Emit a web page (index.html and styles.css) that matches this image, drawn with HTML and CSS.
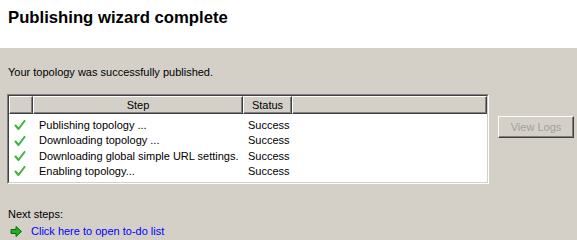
FILE: index.html
```html
<!DOCTYPE html>
<html>
	<head>
		<meta charset="utf-8">
		<title>Publishing wizard complete</title>
		<link rel="stylesheet" href="styles.css">
	</head>
	<body>
		<!-- 标题区 -->
		<div class="banner">
			<h1>Publishing wizard complete</h1>
		</div>

		<!-- 内容区 -->
		<div class="content">
			<p class="intro">Your topology was successfully published.</p>

			<div class="results">
				<div class="list">
					<div class="list-inner">
						<table>
							<thead>
								<tr>
									<th class="col-icon"></th>
									<th class="col-step">Step</th>
									<th class="col-status">Status</th>
									<th class="col-fill"></th>
								</tr>
							</thead>
							<tbody>
								<tr class="first">
									<td class="icon"><svg viewBox="0 0 12 11" width="12" height="11"><path d="M1.5 5.5 L4.5 9 L10.5 1" /></svg></td>
									<td>Publishing topology ...</td>
									<td>Success</td>
									<td></td>
								</tr>
								<tr>
									<td class="icon"><svg viewBox="0 0 12 11" width="12" height="11"><path d="M1.5 5.5 L4.5 9 L10.5 1" /></svg></td>
									<td>Downloading topology ...</td>
									<td>Success</td>
									<td></td>
								</tr>
								<tr>
									<td class="icon"><svg viewBox="0 0 12 11" width="12" height="11"><path d="M1.5 5.5 L4.5 9 L10.5 1" /></svg></td>
									<td>Downloading global simple URL settings.</td>
									<td>Success</td>
									<td></td>
								</tr>
								<tr>
									<td class="icon"><svg viewBox="0 0 12 11" width="12" height="11"><path d="M1.5 5.5 L4.5 9 L10.5 1" /></svg></td>
									<td>Enabling topology...</td>
									<td>Success</td>
									<td></td>
								</tr>
							</tbody>
						</table>
					</div>
				</div>
				<button class="logs" disabled>View Logs</button>
			</div>

			<p class="next">Next steps:</p>
			<a class="todo" href="#">
				<svg viewBox="0 0 13 13" width="13" height="13"><path d="M1 4.5 H6 V1.5 L11.5 6.5 L6 11.5 V8.5 H1 Z" /></svg>
				<span>Click here to open to-do list</span>
			</a>
		</div>
	</body>
</html>
```

FILE: styles.css
```css
/* 页面基础 */
html, body {
	margin: 0;
	padding: 0;
	height: 100%;
}

body {
	font-family: "Liberation Sans", Arial, sans-serif;
	font-size: 11px;
	color: #000;
	background-color: #d4d0c8;
}

/* 标题区 */
.banner {
	height: 48px;
	padding-left: 8px;
	background-color: #fff;
	overflow: hidden;
}

.banner h1 {
	margin: 8px 0 0;
	font-size: 16.7px;
	font-weight: bold;
	line-height: 20px;
}

/* 内容区 */
.content {
	padding: 0 0 0 7px;
}

.intro {
	margin: 0;
	padding: 18px 0 0 1px;
	line-height: 13px;
}

.results {
	display: flex;
	align-items: flex-start;
	margin-top: 15px;
}

/* 列表（凹陷边框） */
.list {
	flex-shrink: 0;
	width: 480px;
	height: 88px;
	border: 1px solid;
	border-color: #808080 #fff #fff #808080;
}

.list-inner {
	height: 86px;
	border: 1px solid;
	border-color: #404040 #d4d0c8 #d4d0c8 #404040;
	background-color: #fff;
	overflow: hidden;
}

.list table {
	width: 100%;
	border-collapse: separate;
	border-spacing: 0;
	table-layout: fixed;
}

.list th {
	box-sizing: border-box;
	height: 18px;
	padding: 0;
	font-weight: normal;
	text-align: center;
	line-height: 16px;
	background-color: #d4d0c8;
	border-top: 1px solid #fff;
	border-left: 1px solid #fff;
	border-right: 1px solid #404040;
	border-bottom: 1px solid #404040;
	box-shadow: inset 0 -1px 0 #808080, inset -1px 0 0 #808080;
}

.list .col-icon {
	width: 24px;
}

.list .col-step {
	width: 210px;
}

.list .col-status {
	width: 49px;
}

.list td {
	height: 15.4px;
	padding: 0 0 0 6px;
	line-height: 15.4px;
	white-space: nowrap;
	vertical-align: middle;
}

.list td:nth-child(3) {
	padding-left: 5px;
}

.list tr.first td {
	padding-top: 4px;
}

.list td.icon {
	padding-left: 5px;
}

.list td.icon svg {
	display: block;
	fill: none;
	stroke: #3cb43c;
	stroke-width: 2;
	stroke-linecap: round;
	stroke-linejoin: round;
}

/* 按钮（禁用状态） */
.logs {
	flex-shrink: 0;
	width: 76px;
	height: 22px;
	margin: 22px 0 0 9px;
	padding: 0;
	font-family: "Liberation Sans", Arial, sans-serif;
	font-size: 11px;
	color: #a0a0a0;
	background-color: #d4d0c8;
	border: 1px solid;
	border-color: #fff #404040 #404040 #fff;
	box-shadow: inset -1px -1px 0 #808080;
}

/* 下一步 */
.next {
	margin: 0;
	padding: 24px 0 0 1px;
	line-height: 13px;
}

.todo {
	display: flex;
	align-items: center;
	margin-top: 4px;
	padding-left: 3px;
	color: #0000ff;
	text-decoration: none;
	line-height: 13px;
}

.todo svg {
	fill: #20b020;
	stroke: #0a6a0a;
	stroke-width: 1;
	stroke-linejoin: round;
	margin-right: 8px;
}
```
